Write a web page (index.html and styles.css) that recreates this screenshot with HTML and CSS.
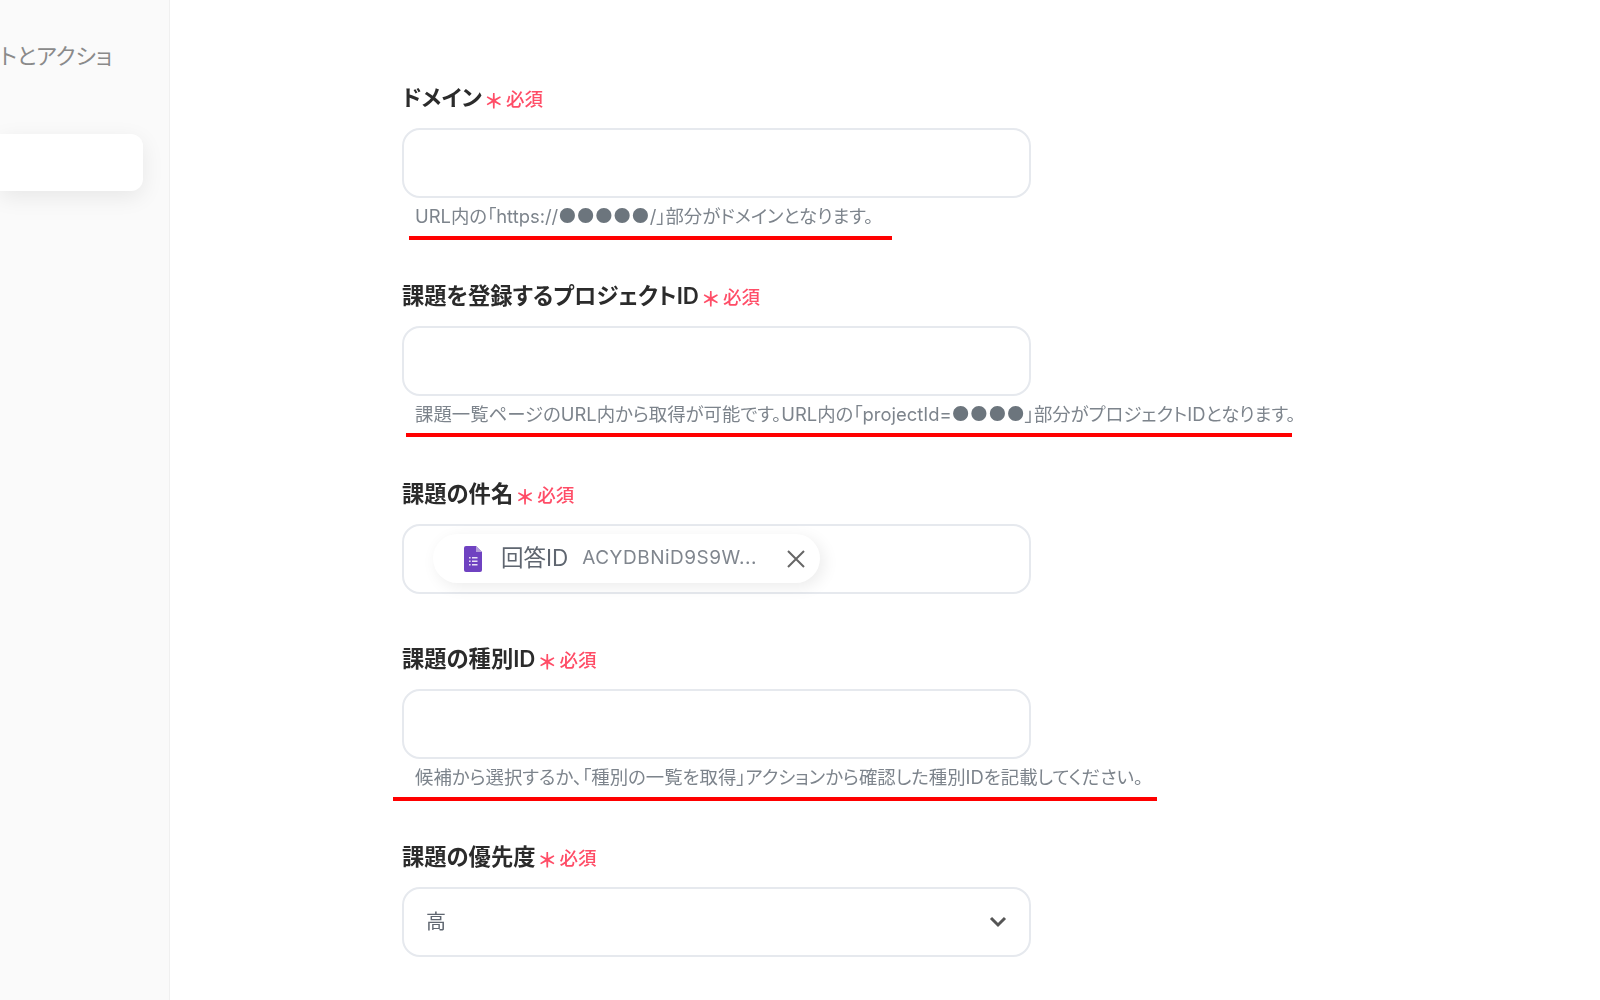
FILE: index.html
```html
<!DOCTYPE html>
<html lang="ja">

<head>
    <meta charset="UTF-8">
    <meta name="viewport" content="width=device-width, initial-scale=1.0">
    <title>課題の登録</title>
    <link rel="stylesheet" href="styles.css">
</head>

<body>
    <aside class="sidebar">
        <p class="sidebar-title">トとアクショ</p>
        <div class="sidebar-card"></div>
    </aside>

    <main class="form">
        <div class="field field-help">
            <div class="label">ドメイン <span class="required"><span class="star">＊</span>必須</span></div>
            <div class="box"></div>
            <p class="help">URL内の「https://<span class="dots">●●●●●</span>/」部分がドメインとなります。</p>
            <div class="red-line line-domain"></div>
        </div>

        <div class="field field-help">
            <div class="label">課題を登録するプロジェクトID <span class="required"><span class="star">＊</span>必須</span></div>
            <div class="box"></div>
            <p class="help">課題一覧ページのURL内から取得が可能です。URL内の「projectId=<span class="dots">●●●●</span>」部分がプロジェクトIDとなります。</p>
            <div class="red-line line-project"></div>
        </div>

        <div class="field">
            <div class="label">課題の件名 <span class="required"><span class="star">＊</span>必須</span></div>
            <div class="box box-chip">
                <div class="chip">
                    <svg class="chip-icon" width="18" height="26" viewBox="0 0 18 26">
                        <path d="M2 0h10l6 6v18a2 2 0 0 1-2 2H2a2 2 0 0 1-2-2V2a2 2 0 0 1 2-2z" fill="#6f42c1" />
                        <path d="M12 0l6 6h-6z" fill="#b39ddb" />
                        <path d="M5 11h1.600v1.600H5zM8 11h5.500v1.600H8zM5 14.500h1.600v1.600H5zM8 14.500h5.500v1.600H8zM5 18h1.600v1.600H5zM8 18h5.500v1.600H8z" fill="#e8e0f5" />
                    </svg>
                    <span class="chip-name">回答ID</span>
                    <span class="chip-value">ACYDBNiD9S9W...</span>
                    <svg class="chip-close" width="20" height="20" viewBox="0 0 20 20">
                        <path d="M2 2l16 16M18 2L2 18" stroke="#666" stroke-width="2" fill="none" />
                    </svg>
                </div>
            </div>
        </div>

        <div class="field field-help">
            <div class="label">課題の種別ID <span class="required"><span class="star">＊</span>必須</span></div>
            <div class="box"></div>
            <p class="help">候補から選択するか、「種別の一覧を取得」アクションから確認した種別IDを記載してください。</p>
            <div class="red-line line-type"></div>
        </div>

        <div class="field">
            <div class="label">課題の優先度 <span class="required"><span class="star">＊</span>必須</span></div>
            <div class="box box-select">
                <span class="select-value">高</span>
                <svg width="18" height="12" viewBox="0 0 18 12">
                    <path d="M2 2l7 7 7-7" stroke="#555" stroke-width="3" fill="none" />
                </svg>
            </div>
        </div>
    </main>
</body>

</html>
```

FILE: styles.css
```css
body {
    font-family: Inter, 'Noto Sans CJK JP', sans-serif;
    font-feature-settings: "palt";
    margin: 0;
    padding: 0;
    background-color: #fff;
    color: #333;
    display: flex;
    height: 100vh;
    overflow: hidden;
    /* the source picture is a soft upscaled capture */
    filter: blur(0.5px);
}

.sidebar {
    width: 170px;
    flex-shrink: 0;
    background-color: #fafafa;
    border-right: 1px solid #f0f0f0;
    box-sizing: border-box;
    padding-top: 40px;
    overflow: hidden;
}

.sidebar-title {
    margin: 0;
    font-size: 22px;
    line-height: 32px;
    color: #8a8a8a;
    white-space: nowrap;
}

.sidebar-card {
    width: 143px;
    height: 57px;
    margin-top: 62px;
    background: #fff;
    border-radius: 0 12px 12px 0;
    box-shadow: 0 6px 22px rgba(0, 0, 0, 0.08);
}

.form {
    width: 629px;
    margin-left: 232px;
    padding-top: 83px;
}

.field {
    position: relative;
    height: 165px;
}

.field-help {
    height: 198px;
}

.label {
    font-size: 22.300px;
    font-weight: 600;
    line-height: 30px;
    color: #2b2b2b;
    white-space: nowrap;
}

.required {
    font-size: 18.500px;
    font-weight: 500;
    color: #ff4d67;
    margin-left: -2px;
}

.star {
    font-size: 20px;
    font-weight: 700;
    line-height: 20px;
    vertical-align: -3px;
    margin-right: 4px;
}

.box {
    height: 70px;
    margin-top: 14px;
    box-sizing: border-box;
    background: #fff;
    border: 2px solid #e6e9ee;
    border-radius: 18px;
}

.box-chip {
    padding: 8px 0 0 29px;
}

.chip {
    display: inline-flex;
    align-items: center;
    height: 49px;
    width: 387px;
    box-sizing: border-box;
    padding: 0 14px 0 31px;
    background: #fff;
    border-radius: 25px;
    box-shadow: 4px 4px 16px rgba(0, 0, 0, 0.08);
}

.chip-name {
    margin-left: 19px;
    padding-bottom: 5px;
    font-size: 22.500px;
    color: #5f6670;
}

.chip-value {
    margin-left: 14px;
    padding-bottom: 2px;
    flex: 1;
    font-size: 19px;
    letter-spacing: 0.5px;
    color: #80868e;
    white-space: nowrap;
}

.box-select {
    display: flex;
    align-items: center;
    justify-content: space-between;
    padding: 0 22px;
}

.select-value {
    padding-bottom: 3px;
    font-size: 20px;
    color: #5f6670;
}

.help {
    margin: 5px 0 0 13px;
    font-size: 18.400px;
    line-height: 26px;
    color: #7d848c;
    white-space: nowrap;
}

.dots {
    font-size: 20px;
    color: #6c757d;
}

/* annotation lines drawn over the screenshot */
.red-line {
    position: absolute;
    height: 4px;
    background: #f00;
}

.line-domain {
    left: 7px;
    top: 153px;
    width: 483px;
}

.line-project {
    left: 4px;
    top: 152px;
    width: 886px;
}

.line-type {
    left: -9px;
    top: 153px;
    width: 764px;
}
```
